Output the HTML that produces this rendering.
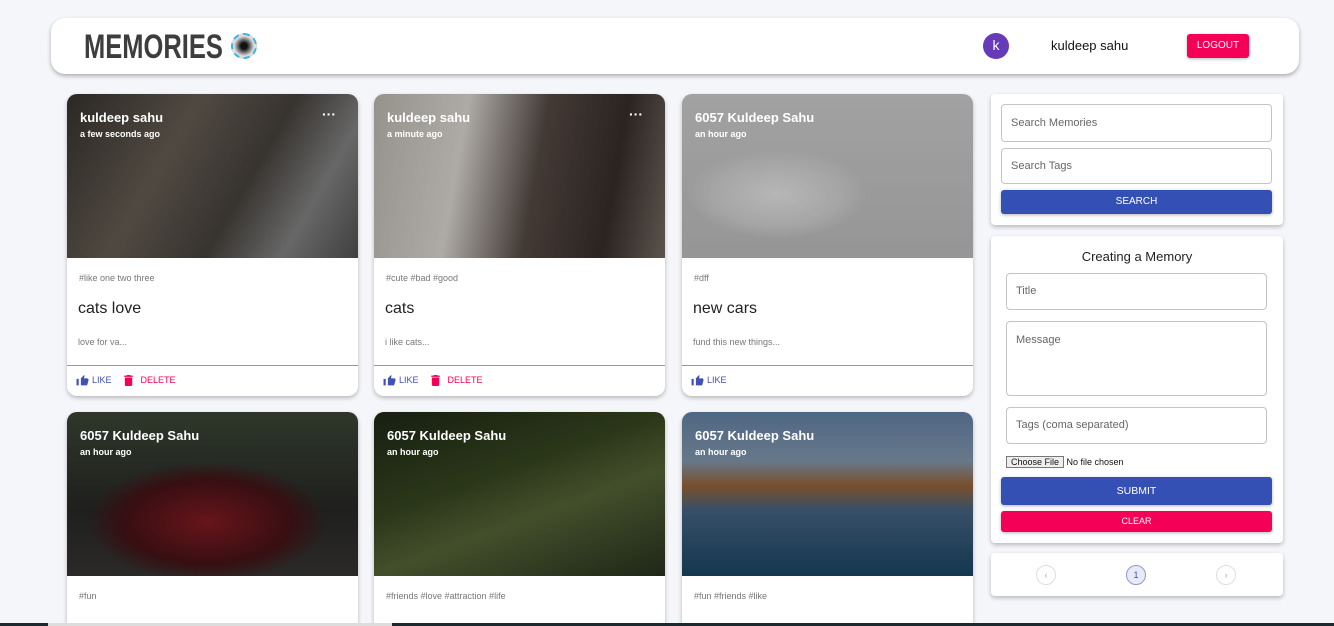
<!DOCTYPE html>
<html style="overflow:hidden;height:626px"><head><style>
*{box-sizing:border-box;margin:0;padding:0}
body{width:1334px;height:626px;overflow:hidden;background:#f5f6fa;font-family:"Liberation Sans",Arial,sans-serif;position:relative}
.bar{position:absolute;left:51px;top:18px;width:1248px;height:56px;background:#fff;border-radius:14px;box-shadow:0 2px 4px rgba(0,0,0,.3)}
.logo{position:absolute;left:33px;top:10px;font-size:34px;font-weight:bold;color:#3d3d3d;transform:scaleX(.75);transform-origin:left;font-family:"Liberation Sans Narrow","Liberation Sans",sans-serif}
.lens{position:absolute;left:180px;top:15px;width:26px;height:26px;border-radius:50%;border:2px dashed #3bb4e0;background:radial-gradient(circle,#111 0 3px,#666 6px,#ddd 10px)}
.av{position:absolute;left:932px;top:15px;width:26px;height:26px;border-radius:50%;background:#673ab7;color:#fff;font-size:14px;text-align:center;line-height:25px}
.un{position:absolute;left:1000px;top:20px;font-size:13px;color:#111}
.lo{position:absolute;left:1136px;top:16px;width:62px;height:24px;background:#f50057;color:#fff;font-size:10px;text-align:center;line-height:24px;border-radius:3px;box-shadow:0 1px 3px rgba(0,0,0,.3)}
.card{position:absolute;width:291px;background:#fff;border-radius:10px;overflow:hidden;box-shadow:0 2px 4px rgba(0,0,0,.25)}
.img{height:164px;position:relative}
.img::after{content:"";position:absolute;inset:0;background:rgba(0,0,0,.25)}
.n{position:absolute;left:13px;top:16px;color:#fff;font-size:13px;font-weight:bold;z-index:2}
.t{position:absolute;left:13px;top:35px;color:#fff;font-size:9px;font-weight:bold;z-index:2}
.d{position:absolute;right:22px;top:12px;color:#fff;font-size:14px;font-weight:bold;z-index:2}
.tags{position:absolute;left:12px;top:179px;font-size:9px;color:#777}
.ti{position:absolute;left:11px;top:206px;font-size:16px;color:#222}
.ms{position:absolute;left:11px;top:243px;font-size:9px;color:#777}
.hr{position:absolute;left:0;right:0;top:271px;border-top:1px solid #999}
.act{position:absolute;left:9px;top:280px;font-size:9px;display:flex;gap:12px;align-items:center}
.lk{color:#3f51b5;display:flex;align-items:center;gap:3px}
.dl{color:#f50057;display:flex;align-items:center;gap:8px}
.pan{position:absolute;left:991px;width:292px;background:#fff;border-radius:4px;box-shadow:0 2px 4px rgba(0,0,0,.25)}
.in{position:absolute;border:1px solid #c4c4c4;border-radius:4px;font-size:11px;color:#666;padding-left:9px}
.btn{position:absolute;left:10px;width:271px;color:#fff;text-align:center;border-radius:3px;font-size:10px;box-shadow:0 1px 3px rgba(0,0,0,.3)}
.pg{position:absolute;top:12px;width:20px;height:20px;border-radius:50%;border:1px solid #ddd;font-size:9px;color:#aaa;text-align:center;line-height:18px}
</style></head><body>
<div class="bar"><div class="logo">MEMORIES</div><div class="lens"></div><div class="av">k</div><div class="un">kuldeep sahu</div><div class="lo">LOGOUT</div></div>

<div class="card" style="left:67px;top:94px;height:302px"><div class="img" style="background:linear-gradient(120deg,#3a3530 0%,#6b6258 35%,#4a4540 60%,#8a8a8a 80%,#555 100%)"><div class="n">kuldeep sahu</div><div class="t">a few seconds ago</div><div class="d">···</div></div>
<div class="tags">#like one two three</div><div class="ti">cats love</div><div class="ms">love for va...</div><div class="hr"></div>
<div class="act"><span class="lk"><svg width="13" height="12" viewBox="0 0 24 22"><path fill="#3f51b5" d="M1 21h4V9H1zM23 10c0-1.1-.9-2-2-2h-6.3l1-4.6V3l-1.1-1L9 8v13h10c.8 0 1.5-.5 1.8-1.2L23 12z"/></svg>LIKE</span><span class="dl"><svg width="9" height="11" viewBox="0 0 14 18"><path fill="#f50057" d="M1 16c0 1.1.9 2 2 2h8c1.1 0 2-.9 2-2V4H1zM14 1h-3.5l-1-1h-5l-1 1H0v2h14z"/></svg>DELETE</span></div></div>

<div class="card" style="left:374px;top:94px;height:302px"><div class="img" style="background:linear-gradient(100deg,#c8c4bc 0%,#e8e4de 30%,#5a4e48 55%,#3a302c 80%,#7a7068 100%)"><div class="n">kuldeep sahu</div><div class="t">a minute ago</div><div class="d">···</div></div>
<div class="tags">#cute #bad #good</div><div class="ti">cats</div><div class="ms">i like cats...</div><div class="hr"></div>
<div class="act"><span class="lk"><svg width="13" height="12" viewBox="0 0 24 22"><path fill="#3f51b5" d="M1 21h4V9H1zM23 10c0-1.1-.9-2-2-2h-6.3l1-4.6V3l-1.1-1L9 8v13h10c.8 0 1.5-.5 1.8-1.2L23 12z"/></svg>LIKE</span><span class="dl"><svg width="9" height="11" viewBox="0 0 14 18"><path fill="#f50057" d="M1 16c0 1.1.9 2 2 2h8c1.1 0 2-.9 2-2V4H1zM14 1h-3.5l-1-1h-5l-1 1H0v2h14z"/></svg>DELETE</span></div></div>

<div class="card" style="left:682px;top:94px;height:302px"><div class="img" style="background:radial-gradient(ellipse 90px 45px at 95px 100px,#f4f4f4 0,#ddd 70%,transparent 100%),linear-gradient(#d8d8d8,#c8c8c8)"><div class="n">6057 Kuldeep Sahu</div><div class="t">an hour ago</div></div>
<div class="tags">#dff</div><div class="ti">new cars</div><div class="ms">fund this new things...</div><div class="hr"></div>
<div class="act"><span class="lk"><svg width="13" height="12" viewBox="0 0 24 22"><path fill="#3f51b5" d="M1 21h4V9H1zM23 10c0-1.1-.9-2-2-2h-6.3l1-4.6V3l-1.1-1L9 8v13h10c.8 0 1.5-.5 1.8-1.2L23 12z"/></svg>LIKE</span></div></div>

<div class="card" style="left:67px;top:412px;height:214px;border-radius:10px 10px 0 0"><div class="img" style="background:radial-gradient(ellipse 120px 60px at 140px 110px,#8a1c24 0,#4a1418 70%,transparent 100%),linear-gradient(#3e4a38,#2a2a28 60%,#3a3836)"><div class="n">6057 Kuldeep Sahu</div><div class="t">an hour ago</div></div><div class="tags">#fun</div></div>
<div class="card" style="left:374px;top:412px;height:214px;border-radius:10px 10px 0 0"><div class="img" style="background:linear-gradient(160deg,#1e2a18 0%,#3a4a22 40%,#5a6a3a 60%,#2a3420 100%)"><div class="n">6057 Kuldeep Sahu</div><div class="t">an hour ago</div></div><div class="tags">#friends #love #attraction #life</div></div>
<div class="card" style="left:682px;top:412px;height:214px;border-radius:10px 10px 0 0"><div class="img" style="background:linear-gradient(#6a8ab0 0%,#8aa0b8 30%,#a06a3a 45%,#4a6a8a 60%,#1a4a6a 100%)"><div class="n">6057 Kuldeep Sahu</div><div class="t">an hour ago</div></div><div class="tags">#fun #friends #like</div></div>

<div style="position:absolute;left:0;top:623px;width:1334px;height:3px;background:#1c2a30"></div>
<div style="position:absolute;left:48px;top:623px;width:344px;height:3px;background:#ddd"></div>

<div class="pan" style="top:94px;height:131px">
<div class="in" style="left:10px;top:10px;width:271px;height:38px;line-height:36px">Search Memories</div>
<div class="in" style="left:10px;top:54px;width:271px;height:36px;line-height:34px">Search Tags</div>
<div class="btn" style="top:96px;height:24px;line-height:24px;background:#3450b4">SEARCH</div></div>

<div class="pan" style="top:236px;height:307px">
<div style="position:absolute;left:0;right:0;top:13px;text-align:center;font-size:13px;color:#222">Creating a Memory</div>
<div class="in" style="left:15px;top:37px;width:261px;height:37px;line-height:35px">Title</div>
<div class="in" style="left:15px;top:85px;width:261px;height:75px;padding-top:12px">Message</div>
<div class="in" style="left:15px;top:171px;width:261px;height:37px;line-height:35px">Tags (coma separated)</div>
<div style="position:absolute;left:15px;top:221px;font-size:9px;color:#111"><span style="border:1px solid #777;background:#eee;padding:0 4px">Choose File</span> No file chosen</div>
<div class="btn" style="top:241px;height:28px;line-height:28px;background:#3450b4;font-size:10.5px">SUBMIT</div>
<div class="btn" style="top:275px;height:21px;line-height:21px;background:#f50057;font-size:9px">CLEAR</div></div>

<div class="pan" style="top:553px;height:43px">
<div class="pg" style="left:45px">‹</div>
<div class="pg" style="left:135px;background:#e8eaf6;border-color:#8c9ad8;color:#3f51b5">1</div>
<div class="pg" style="left:225px">›</div></div>
</body></html>
